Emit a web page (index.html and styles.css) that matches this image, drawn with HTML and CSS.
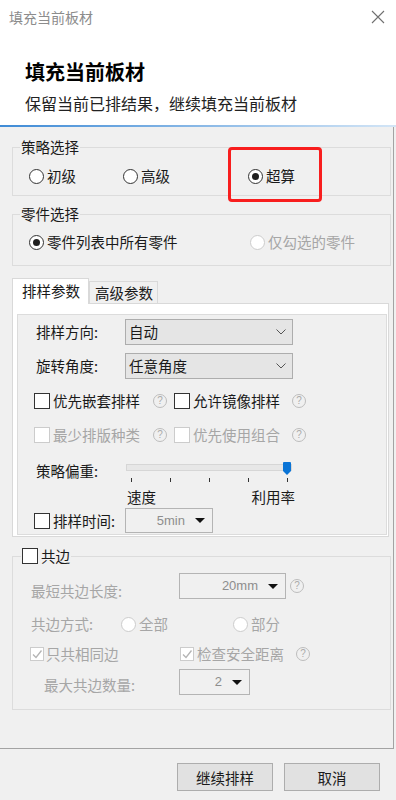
FILE: index.html
```html
<!DOCTYPE html>
<html lang="zh-CN">
<head>
    <meta charset="UTF-8" />
    <title>填充当前板材</title>
    <link rel="stylesheet" href="styles.css">
</head>
<body>
<div class="dialog">

    <div class="header">
        <div class="titlebar">
            <span class="win-title">填充当前板材</span>
            <svg class="close" viewBox="0 0 14 14"><path d="M1 1L13 13M13 1L1 13" stroke="#707070" stroke-width="1.1" fill="none"/></svg>
        </div>
        <h1 class="heading">填充当前板材</h1>
        <p class="subheading">保留当前已排结果，继续填充当前板材</p>
    </div>
    <div class="accent"></div>

    <div class="main">
        <fieldset class="group group-strategy">
            <legend>策略选择</legend>
            <div class="strategy-row">
                <label class="radio"><span class="dot"></span>初级</label>
                <label class="radio"><span class="dot"></span>高级</label>
                <label class="radio"><span class="dot checked"></span>超算</label>
                <div class="highlight"></div>
            </div>
        </fieldset>

        <fieldset class="group group-parts">
            <legend>零件选择</legend>
            <div class="parts-row">
                <label class="radio"><span class="dot checked"></span>零件列表中所有零件</label>
                <label class="radio disabled"><span class="dot"></span>仅勾选的零件</label>
            </div>
        </fieldset>

        <div class="tabs">
            <div class="tab active">排样参数</div>
            <div class="tab">高级参数</div>
        </div>
        <div class="tab-panel">
            <div class="param-box">
                <div class="field-row">
                    <span class="field-label">排样方向:</span>
                    <div class="combo"><span>自动</span><svg class="chev" viewBox="0 0 10 6"><path d="M0.5 0.5L5 5L9.5 0.5" stroke="#555" fill="none"/></svg></div>
                </div>
                <div class="field-row row-gap">
                    <span class="field-label">旋转角度:</span>
                    <div class="combo"><span>任意角度</span><svg class="chev" viewBox="0 0 10 6"><path d="M0.5 0.5L5 5L9.5 0.5" stroke="#555" fill="none"/></svg></div>
                </div>

                <div class="check-row first">
                    <div class="check-item"><span class="check"></span>优先嵌套排样<span class="help">?</span></div>
                    <div class="check-item"><span class="check"></span>允许镜像排样<span class="help">?</span></div>
                </div>
                <div class="check-row second disabled">
                    <div class="check-item"><span class="check"></span>最少排版种类<span class="help">?</span></div>
                    <div class="check-item"><span class="check"></span>优先使用组合<span class="help">?</span></div>
                </div>

                <div class="slider-row">
                    <span class="slider-label">策略偏重:</span>
                    <div class="slider">
                        <div class="track"></div>
                        <svg class="thumb" viewBox="0 0 8 13"><path d="M1 0H7Q8 0 8 1V9L4 13L0 9V1Q0 0 1 0Z" fill="#0a74d6"/></svg>
                        <div class="ticks"><i></i><i></i><i></i><i></i><i></i></div>
                        <div class="slider-ends"><span>速度</span><span>利用率</span></div>
                    </div>
                </div>

                <div class="time-row">
                    <label class="time-label"><span class="check"></span>排样时间:</label>
                    <div class="drop drop-time"><span>5min</span><i class="caret"></i></div>
                </div>
            </div>
        </div>

        <fieldset class="group group-edge">
            <legend><span class="check"></span>共边</legend>
            <div class="edge-row">
                <span class="edge-label">最短共边长度:</span>
                <div class="drop drop-len"><span>20mm</span><i class="caret"></i></div>
                <span class="help">?</span>
            </div>
            <div class="mode-row">
                <span class="mode-label">共边方式:</span>
                <label class="radio disabled mode-item"><span class="dot"></span>全部</label>
                <label class="radio disabled"><span class="dot"></span>部分</label>
            </div>
            <div class="same-row">
                <div class="check-item"><span class="check ticked"><svg viewBox="0 0 12 12"><path d="M2 6.5L5 9.5L10.5 2.5" stroke="#b4b4b4" stroke-width="1.3" fill="none"/></svg></span>只共相同边</div>
                <div class="check-item"><span class="check ticked"><svg viewBox="0 0 12 12"><path d="M2 6.5L5 9.5L10.5 2.5" stroke="#b4b4b4" stroke-width="1.3" fill="none"/></svg></span>检查安全距离<span class="help">?</span></div>
            </div>
            <div class="count-row">
                <span class="count-label">最大共边数量:</span>
                <div class="drop drop-count"><span>2</span><i class="caret"></i></div>
            </div>
        </fieldset>
    </div>

    <div class="footer">
        <button class="btn">继续排样</button>
        <button class="btn">取消</button>
    </div>
</div>
</body>
</html>
```

FILE: styles.css
```css
* {
    box-sizing: border-box;
}

body {
    margin: 0;
    background: #f0f0f0;
    font-family: "Noto Sans CJK SC", "Microsoft YaHei", sans-serif;
    font-size: 14.5px;
    line-height: 18px;
    color: #1a1a1a;
}

.dialog {
    width: 396px;
    height: 800px;
}

/* header */
.header {
    height: 125px;
    background: #fff;
}

.titlebar {
    height: 34px;
    display: flex;
    align-items: center;
    justify-content: space-between;
    padding: 0 11px 0 9px;
}

.win-title {
    font-size: 14px;
    color: #8c8c8c;
}

.close {
    width: 14px;
    height: 14px;
}

.heading {
    margin: 24px 0 0 25px;
    font-size: 20px;
    line-height: 28px;
    font-weight: bold;
    color: #000;
}

.subheading {
    margin: 5px 0 0 25px;
    font-size: 16px;
    line-height: 24px;
    color: #222;
}

.accent {
    height: 2px;
    background: linear-gradient(to right, #3f8bd6, #d3e5f6);
}

/* main panel */
.main {
    width: 394px;
    height: 622px;
    padding: 11px 2px 0 12px;
    border-right: 1px solid #a3a3a3;
    border-bottom: 1px solid #a3a3a3;
}

.group {
    margin: 0;
    min-width: 0;
    border: 1px solid #dcdcdc;
    padding: 11px 0 10px 16px;
}

.group legend {
    padding: 0 1px;
    margin-left: -9px;
    line-height: 18px;
}

.group-parts {
    margin-top: 9px;
    padding: 10px 0 14px 16px;
}

.strategy-row {
    position: relative;
    display: grid;
    grid-template-columns: 94px 125px auto;
}

.parts-row {
    display: grid;
    grid-template-columns: 221px auto;
}

.highlight {
    position: absolute;
    left: 199px;
    top: -20px;
    width: 94px;
    height: 55px;
    border: 3px solid #f81e1e;
    border-radius: 4px;
}

.radio {
    display: flex;
    align-items: center;
    height: 18px;
}

.dot {
    width: 15px;
    height: 15px;
    margin-right: 3px;
    border: 1px solid #333;
    border-radius: 50%;
    background: #fff;
    display: flex;
    align-items: center;
    justify-content: center;
    flex: none;
}

.dot.checked::after {
    content: "";
    width: 7px;
    height: 7px;
    border-radius: 50%;
    background: #1f1f1f;
}

.disabled {
    color: #a6a6a6;
}

.disabled .dot,
.disabled .check {
    border-color: #cccccc;
}

/* tabs */
.tabs {
    margin-top: 12px;
    height: 25px;
    display: flex;
    align-items: flex-end;
}

.tab {
    width: 69px;
    height: 22px;
    padding-left: 5px;
    line-height: 21px;
    border: 1px solid #d9d9d9;
    border-bottom: none;
    background: #f0f0f0;
}

.tab.active {
    position: relative;
    z-index: 1;
    width: 77px;
    height: 26px;
    margin-bottom: -1px;
    padding-left: 9px;
    line-height: 23px;
    background: #fff;
}

.tab-panel {
    margin-right: 2px;
    border: 1px solid #d9d9d9;
    background: #fff;
    padding: 10px 1px 1px 4px;
}

.param-box {
    border: 1px solid #dcdcdc;
    background: #f0f0f0;
    padding: 4px 0 1px 18px;
}

.field-row {
    display: flex;
    align-items: center;
}

.row-gap {
    margin-top: 8px;
}

.field-label {
    width: 89px;
}

.combo {
    width: 168px;
    height: 26px;
    padding: 0 6px 0 3px;
    border: 1px solid #adadad;
    background: #e5e5e5;
    display: flex;
    align-items: center;
    justify-content: space-between;
}

.chev {
    width: 10px;
    height: 6px;
}

.check-row {
    display: grid;
    grid-template-columns: 140px auto;
    height: 20px;
    margin-left: -2px;
    align-items: center;
}

.check-row.first {
    margin-top: 12px;
}

.check-row.second {
    margin-top: 14px;
}

.check-item {
    display: flex;
    align-items: center;
}

.check {
    width: 16px;
    height: 16px;
    margin-right: 3px;
    border: 1px solid #333;
    background: #fff;
    flex: none;
}

.check svg {
    display: block;
    width: 100%;
    height: 100%;
}

.help {
    width: 14px;
    height: 14px;
    margin-left: 13px;
    border: 1px solid #bdbdbd;
    border-radius: 50%;
    font-family: "Liberation Sans", Arial, sans-serif;
    font-size: 10px;
    line-height: 12px;
    text-align: center;
    color: #ababab;
    flex: none;
}

.check-item + .check-item .help {
    margin-left: 12px;
}

/* slider */
.slider-row {
    margin-top: 17px;
    display: flex;
    align-items: flex-start;
}

.slider-label {
    width: 90px;
}

.slider {
    position: relative;
    width: 166px;
}

.track {
    height: 7px;
    margin-top: 2px;
    border: 1px solid #d6d6d6;
    background: #e7e7e7;
}

.thumb {
    position: absolute;
    top: 0;
    right: 1px;
    width: 8px;
    height: 13px;
}

.ticks {
    margin-top: 7px;
    padding: 0 4px 0 5px;
    height: 4px;
    display: flex;
    justify-content: space-between;
}

.ticks i {
    width: 1px;
    height: 4px;
    background: #333;
}

.slider-ends {
    margin: 6px -3px 0 1px;
    display: flex;
    justify-content: space-between;
}

.time-row {
    margin: 2px 0 0 -2px;
    display: flex;
    align-items: center;
}

.time-label {
    width: 91px;
    display: flex;
    align-items: center;
}

.drop {
    height: 25px;
    padding-right: 7px;
    border: 1px solid #b4b4b4;
    display: flex;
    align-items: center;
    justify-content: flex-end;
    font-family: "Liberation Sans", Arial, sans-serif;
    font-size: 13px;
    color: #8d8d8d;
}

.caret {
    margin-left: 10px;
    width: 0;
    height: 0;
    border-left: 5px solid transparent;
    border-right: 5px solid transparent;
    border-top: 5px solid #111;
}

.drop-time {
    width: 88px;
}

/* shared edges */
.group-edge {
    margin: 10px 0 0 0;
    padding: 8px 0 14px 18px;
    color: #a6a6a6;
}

.group-edge legend {
    margin-left: -10px;
    display: flex;
    align-items: center;
    color: #1a1a1a;
}

.group-edge legend .check {
    margin-right: 3px;
}

.edge-row {
    display: flex;
    align-items: flex-start;
}

.edge-label {
    width: 148px;
    margin-top: 9px;
}

.drop-len {
    width: 107px;
    height: 26px;
}

.edge-row .help {
    margin: 6px 0 0 4px;
}

.mode-row {
    margin-top: 15px;
    display: flex;
    align-items: center;
}

.mode-label {
    width: 90px;
}

.mode-item {
    width: 112px;
}

.same-row {
    margin: 12px 0 0 -1px;
    display: grid;
    grid-template-columns: 150px auto;
    height: 18px;
    align-items: center;
}

.check.ticked {
    width: 14px;
    height: 14px;
    margin-right: 2px;
    border-color: #cccccc;
}

.same-row .check-item + .check-item .check {
    margin-right: 3px;
}

.same-row .help {
    margin-left: 16px;
}

.count-row {
    margin-top: 6px;
    display: flex;
    align-items: flex-start;
}

.count-label {
    width: 135px;
    margin: 7px 0 0 13px;
}

.drop-count {
    width: 71px;
    height: 26px;
}

/* footer */
.footer {
    display: flex;
    justify-content: flex-end;
    gap: 11px;
    padding: 14px 16px 0 0;
}

.btn {
    width: 96px;
    height: 28px;
    border: 1px solid #adadad;
    background: #e1e1e1;
    font-family: "Noto Sans CJK SC", "Microsoft YaHei", sans-serif;
    font-size: 14.5px;
    color: #1a1a1a;
    padding: 0;
}
```
